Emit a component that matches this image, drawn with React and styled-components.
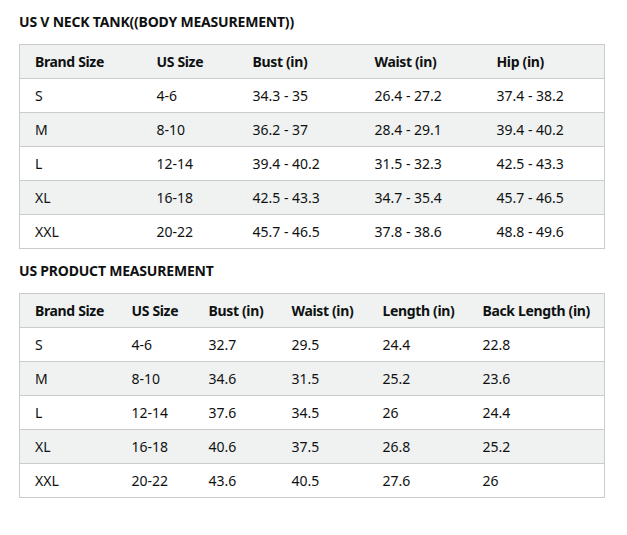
import React from 'react';
import styled, { createGlobalStyle } from 'styled-components';

const GlobalStyle = createGlobalStyle`
  body {
    margin: 0;
    background: #fff;
    font-family: "Noto Sans", "Open Sans", Arial, sans-serif;
    color: #0f1111;
  }
`;

const Page = styled.div`
  padding: 12px 23px 0 19px;
`;

const Title = styled.h3`
  margin: 0 0 12px;
  font-size: 14px;
  line-height: 20px;
  font-weight: 700;
  letter-spacing: -0.2px;
`;

const Table = styled.table`
  width: 585px;
  border-collapse: collapse;
  table-layout: fixed;
  border: 1px solid #c8cccc;
  font-size: 14px;
  margin-bottom: 12px;
`;

const Row = styled.tr`
  height: 34px;
  background: ${(p) => (p.$shaded ? '#f0f2f2' : '#fff')};
  border-bottom: 1px solid #c8cccc;
`;

const Cell = styled.td`
  padding: 0 0 0 15px;
  text-align: left;
  vertical-align: middle;
  font-weight: ${(p) => (p.$head ? 700 : 400)};
  letter-spacing: ${(p) => (p.$head ? '-0.35px' : '0')};
  white-space: nowrap;
`;

const bodyTable = {
  title: 'US V NECK TANK((BODY MEASUREMENT))',
  widths: [122, 96, 122, 122, 123],
  head: ['Brand Size', 'US Size', 'Bust (in)', 'Waist (in)', 'Hip (in)'],
  rows: [
    ['S', '4-6', '34.3 - 35', '26.4 - 27.2', '37.4 - 38.2'],
    ['M', '8-10', '36.2 - 37', '28.4 - 29.1', '39.4 - 40.2'],
    ['L', '12-14', '39.4 - 40.2', '31.5 - 32.3', '42.5 - 43.3'],
    ['XL', '16-18', '42.5 - 43.3', '34.7 - 35.4', '45.7 - 46.5'],
    ['XXL', '20-22', '45.7 - 46.5', '37.8 - 38.6', '48.8 - 49.6'],
  ],
};

const productTable = {
  title: 'US PRODUCT MEASUREMENT',
  widths: [97, 77, 83, 91, 100, 137],
  head: ['Brand Size', 'US Size', 'Bust (in)', 'Waist (in)', 'Length (in)', 'Back Length (in)'],
  rows: [
    ['S', '4-6', '32.7', '29.5', '24.4', '22.8'],
    ['M', '8-10', '34.6', '31.5', '25.2', '23.6'],
    ['L', '12-14', '37.6', '34.5', '26', '24.4'],
    ['XL', '16-18', '40.6', '37.5', '26.8', '25.2'],
    ['XXL', '20-22', '43.6', '40.5', '27.6', '26'],
  ],
};

const SizeTable = ({ data }) => (
  <>
    <Title>{data.title}</Title>
    <Table>
      <colgroup>
        {data.widths.map((w, i) => (
          <col key={i} style={{ width: w }} />
        ))}
      </colgroup>
      <tbody>
        <Row $shaded>
          {data.head.map((h) => (
            <Cell as="th" $head key={h}>{h}</Cell>
          ))}
        </Row>
        {data.rows.map((r, i) => (
          <Row key={r[0]} $shaded={i % 2 === 1}>
            {r.map((c, j) => (
              <Cell key={j}>{c}</Cell>
            ))}
          </Row>
        ))}
      </tbody>
    </Table>
  </>
);

const App = () => (
  <Page>
    <GlobalStyle />
    <SizeTable data={bodyTable} />
    <SizeTable data={productTable} />
  </Page>
);

export default App;
